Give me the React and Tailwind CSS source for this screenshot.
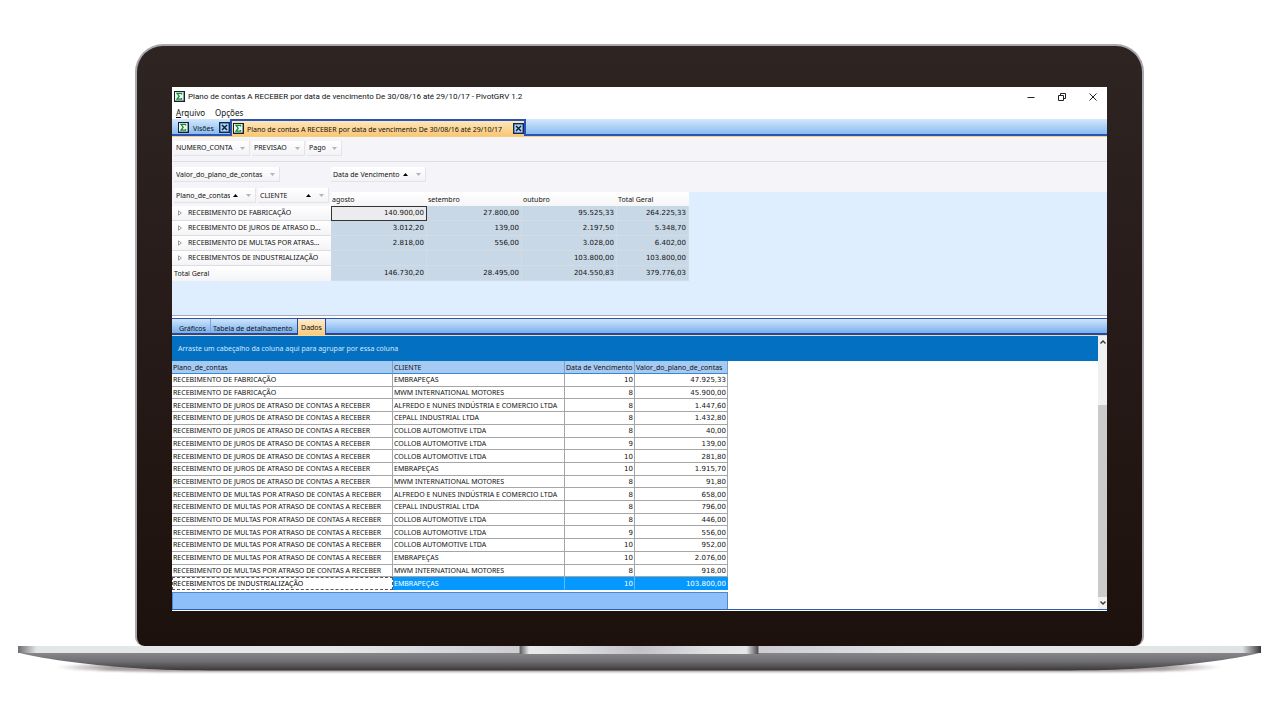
import React from 'react';

const PIVOT_COLUMNS = ['agosto', 'setembro', 'outubro', 'Total Geral'];

const PIVOT_ROWS = [
  ['RECEBIMENTO DE FABRICAÇÃO', '140.900,00', '27.800,00', '95.525,33', '264.225,33'],
  ['RECEBIMENTO DE JUROS DE ATRASO D...', '3.012,20', '139,00', '2.197,50', '5.348,70'],
  ['RECEBIMENTO DE MULTAS POR ATRAS...', '2.818,00', '556,00', '3.028,00', '6.402,00'],
  ['RECEBIMENTOS DE INDUSTRIALIZAÇÃO', '', '', '103.800,00', '103.800,00'],
];

const PIVOT_TOTAL = ['146.730,20', '28.495,00', '204.550,83', '379.776,03'];

const FABRICACAO = 'RECEBIMENTO DE FABRICAÇÃO';
const JUROS = 'RECEBIMENTO DE JUROS DE ATRASO DE CONTAS A RECEBER';
const MULTAS = 'RECEBIMENTO DE MULTAS POR ATRASO DE CONTAS A RECEBER';

const DATA_ROWS = [
  [FABRICACAO, 'EMBRAPEÇAS', '10', '47.925,33'],
  [FABRICACAO, 'MWM INTERNATIONAL MOTORES', '8', '45.900,00'],
  [JUROS, 'ALFREDO E NUNES INDÚSTRIA E COMERCIO LTDA', '8', '1.447,60'],
  [JUROS, 'CEPALL INDUSTRIAL LTDA', '8', '1.432,80'],
  [JUROS, 'COLLOB AUTOMOTIVE LTDA', '8', '40,00'],
  [JUROS, 'COLLOB AUTOMOTIVE LTDA', '9', '139,00'],
  [JUROS, 'COLLOB AUTOMOTIVE LTDA', '10', '281,80'],
  [JUROS, 'EMBRAPEÇAS', '10', '1.915,70'],
  [JUROS, 'MWM INTERNATIONAL MOTORES', '8', '91,80'],
  [MULTAS, 'ALFREDO E NUNES INDÚSTRIA E COMERCIO LTDA', '8', '658,00'],
  [MULTAS, 'CEPALL INDUSTRIAL LTDA', '8', '796,00'],
  [MULTAS, 'COLLOB AUTOMOTIVE LTDA', '8', '446,00'],
  [MULTAS, 'COLLOB AUTOMOTIVE LTDA', '9', '556,00'],
  [MULTAS, 'COLLOB AUTOMOTIVE LTDA', '10', '952,00'],
  [MULTAS, 'EMBRAPEÇAS', '10', '2.076,00'],
  [MULTAS, 'MWM INTERNATIONAL MOTORES', '8', '918,00'],
];

function SigmaIcon() {
  return (
    <svg className="size-[11px] shrink-0" viewBox="0 0 11 11" aria-hidden="true">
      <rect x="0" y="0" width="11" height="11" fill="#16202c" />
      <rect x="1" y="1" width="8.6" height="8.6" fill="#e9f7ee" />
      <path d="M7.6 3.6V2.4H3L5.2 5.2L3 8.2H7.6V7" fill="none" stroke="#0b8a35" strokeWidth="1.2" />
    </svg>
  );
}

function CloseTab({ label }) {
  return (
    <button type="button" aria-label={label} className="shrink-0">
      <svg className="size-[11px]" viewBox="0 0 11 11" aria-hidden="true">
        <rect x="0.7" y="0.7" width="9.6" height="9.6" fill="#a9d3fa" stroke="#102a4c" strokeWidth="1.4" />
        <path d="M3 3L8 8M8 3L3 8" stroke="#0c1a30" strokeWidth="1.4" />
      </svg>
    </button>
  );
}

function Field({ label, width, sorted }) {
  return (
    <button
      type="button"
      className={`flex h-[15px] shrink-0 items-center gap-[3px] border-r border-b border-[#e3e3e8] bg-linear-to-b from-white to-[#f3f3f6] px-[2px] pt-px ${width}`}
    >
      <span className="min-w-0 flex-1 overflow-hidden text-left whitespace-nowrap">{label}</span>
      {sorted && (
        <svg className="mr-[5px] h-[3px] w-[5px] shrink-0" viewBox="0 0 5 3" aria-hidden="true">
          <path d="M0 3L2.5 0L5 3Z" fill="#000" />
        </svg>
      )}
      <svg className="mr-[2px] h-[3px] w-[5px] shrink-0" viewBox="0 0 5 3" aria-hidden="true">
        <path d="M0 0H5L2.5 3Z" fill="#b4b4b8" />
      </svg>
    </button>
  );
}

function TitleBar() {
  return (
    <header className="flex h-[19px] items-center bg-white pr-[10px] pl-[2px] text-[8px]">
      <SigmaIcon />
      <h1 className="ml-[3px] flex-1 font-['Roboto','Noto_Sans',sans-serif] whitespace-nowrap">
        Plano de contas A RECEBER por data de vencimento De 30/08/16 até 29/10/17 - PivotGRV 1.2
      </h1>
      <div className="flex items-center gap-[23px]">
        <button type="button" aria-label="Minimizar">
          <svg className="size-[8px]" viewBox="0 0 8 8" aria-hidden="true">
            <path d="M0.5 4.5H7.5" stroke="#222" strokeWidth="1" />
          </svg>
        </button>
        <button type="button" aria-label="Restaurar">
          <svg className="size-[8px]" viewBox="0 0 8 8" aria-hidden="true" fill="none" stroke="#222">
            <path d="M0.5 2.5H5.5V7.5H0.5ZM2.5 2V0.5H7.5V5.5H6" />
          </svg>
        </button>
        <button type="button" aria-label="Fechar">
          <svg className="size-[8px]" viewBox="0 0 8 8" aria-hidden="true">
            <path d="M0.5 0.5L7.5 7.5M7.5 0.5L0.5 7.5" stroke="#222" strokeWidth="1" />
          </svg>
        </button>
      </div>
    </header>
  );
}

function DocumentTabs() {
  return (
    <div className="flex h-[18px] border-b border-[#f2cf82] bg-linear-to-b from-[#d3e8fc] to-[#7fb5ee]">
      <div className="flex flex-1 border-b-2 border-[#2b52b8]">
        <div className="flex w-[58px] items-center pt-[2px] pl-[6px]">
          <SigmaIcon />
          <button type="button" className="ml-[4px] flex-1 pt-[2px] text-left">Visões</button>
          <CloseTab label="Fechar Visões" />
        </div>
        <div className="-mb-[2px] flex w-[296px] items-center border-x-2 border-t-2 border-[#2b52b8] bg-linear-to-b from-[#fde7ba] to-[#fbc673] pl-px">
          <SigmaIcon />
          <button type="button" className="ml-[3px] flex-1 pt-[2px] text-left whitespace-nowrap">
            Plano de contas A RECEBER por data de vencimento De 30/08/16 até 29/10/17
          </button>
          <CloseTab label="Fechar Plano de contas" />
        </div>
      </div>
    </div>
  );
}

function PivotTable() {
  const value = "bg-[#c9d8e6] border-r border-b border-[#d3dbe3] p-0 pr-[2px] text-right font-['DejaVu_Sans','Noto_Sans',sans-serif] leading-[14px]";
  const focused = "bg-[#ececee] border-r border-b border-[#333] p-0 pr-[2px] text-right font-['DejaVu_Sans','Noto_Sans',sans-serif] leading-[14px] outline-1 -outline-offset-1 outline-[#333]";
  return (
    <div className="h-[128px] bg-[linear-gradient(#f4f4f9_5px,#deeeff_5px)]">
      <table className="w-[517px] table-fixed border-separate border-spacing-0">
        <colgroup>
          <col className="w-[159px]" />
          <col className="w-[96px]" />
          <col className="w-[95px]" />
          <col className="w-[95px]" />
          <col className="w-[72px]" />
        </colgroup>
        <thead>
          <tr className="h-[19px]">
            <th scope="col" className="bg-[#f4f4f9] p-0 align-top font-normal">
              <div className="flex gap-[2px] pt-px pl-[2px]">
                <Field label="Plano_de_contas" width="w-[82px]" sorted />
                <Field label="CLIENTE" width="w-[71px]" sorted />
              </div>
            </th>
            {PIVOT_COLUMNS.map((name) => (
              <th key={name} scope="col" className="p-0 align-bottom font-normal">
                <div className="h-[14px] bg-linear-to-b from-white to-[#f5f5f8] pt-px pl-px text-left leading-[13px]">{name}</div>
              </th>
            ))}
          </tr>
        </thead>
        <tbody>
          {PIVOT_ROWS.map(([label, ...values], row) => (
            <tr key={label} className="h-[15px]">
              <th scope="row" className="border-b border-[#dcdce2] bg-linear-to-b from-white to-[#f4f4f7] p-0 font-normal">
                <button type="button" className="flex items-center pl-[6px] leading-[14px]">
                  <svg className="mr-[6px] h-[6px] w-[4px]" viewBox="0 0 4 6" aria-hidden="true">
                    <path d="M0.5 0.8L3.4 3L0.5 5.2Z" fill="#fff" stroke="#777" strokeWidth="0.7" />
                  </svg>
                  <span className="whitespace-nowrap">{label}</span>
                </button>
              </th>
              {values.map((text, i) => (
                <td key={i} className={row === 0 && i === 0 ? focused : value}>
                  {text}
                </td>
              ))}
            </tr>
          ))}
          <tr>
            <th scope="row" className="bg-linear-to-b from-white to-[#f4f4f7] p-0 pl-[2px] text-left font-normal">Total Geral</th>
            {PIVOT_TOTAL.map((text) => (
              <td key={text} className={value}>
                {text}
              </td>
            ))}
          </tr>
        </tbody>
      </table>
    </div>
  );
}

function DetailTabs() {
  return (
    <div className="border-t border-[#a5abbb] bg-white pt-[2px]">
      <div className="flex h-[17px] border-t border-b-2 border-t-[#2f55a8] border-b-[#2247a8] bg-linear-to-b from-[#cfe5fc] to-[#78b0ec] pl-[4px]">
        <button type="button" className="w-[35px] border-r border-[#7fa6d6] pt-[4px] pl-[3px] text-left">Gráficos</button>
        <button type="button" className="w-[86px] pt-[4px] pl-[2px] text-left whitespace-nowrap">Tabela de detalhamento</button>
        <button type="button" className="-mt-px -mb-[2px] w-[29px] border-x border-t border-[#2247a8] bg-linear-to-b from-[#fdeccb] to-[#fbc87a] pt-[2px]">
          Dados
        </button>
      </div>
      <div className="h-px bg-[#f4dc9c]" />
    </div>
  );
}

function DataGrid() {
  const cell = 'overflow-hidden border-r border-b border-[#a6a6a6] p-0 pt-px pl-px whitespace-nowrap';
  const number = "border-r border-b border-[#a6a6a6] p-0 pt-px pr-px text-right font-['DejaVu_Sans','Noto_Sans',sans-serif]";
  return (
    <div className="flex border-b border-[#2a5fae]">
      <div className="flex-1 bg-white">
        <p className="h-[25px] bg-[#0470c2] pl-[6px] leading-[25px] text-[#d5e9fb]">
          Arraste um cabeçalho da coluna aqui para agrupar por essa coluna
        </p>
        <table className="h-[229px] w-[556px] table-fixed border-separate border-spacing-0 leading-[10px]">
          <colgroup>
            <col className="w-[221px]" />
            <col className="w-[172px]" />
            <col className="w-[70px]" />
            <col className="w-[93px]" />
          </colgroup>
          <thead>
            <tr className="h-[13px] bg-[#a6cbf3] text-left">
              {['Plano_de_contas', 'CLIENTE', 'Data de Vencimento', 'Valor_do_plano_de_contas'].map((name) => (
                <th key={name} scope="col" className="border-r border-b border-r-[#7e9fc8] border-b-[#3b84d6] p-0 pt-[2px] pl-px font-normal whitespace-nowrap">
                  {name}
                </th>
              ))}
            </tr>
          </thead>
          <tbody>
            {DATA_ROWS.map(([account, client, due, amount], i) => (
              <tr key={i}>
                <td className={cell}>{account}</td>
                <td className={cell}>{client}</td>
                <td className={number}>{due}</td>
                <td className={number}>{amount}</td>
              </tr>
            ))}
            <tr className="text-white">
              <td className="border-r border-b border-transparent bg-white p-0 pt-px pl-px text-black outline-1 -outline-offset-1 outline-dashed outline-[#555]">
                RECEBIMENTOS DE INDUSTRIALIZAÇÃO
              </td>
              <td className="border-r border-b border-r-[#5cbcff] border-b-[#0598ff] bg-[#0598ff] p-0 pt-px pl-px">EMBRAPEÇAS</td>
              <td className="border-r border-b border-r-[#5cbcff] border-b-[#0598ff] bg-[#0598ff] p-0 pt-px pr-px text-right font-['DejaVu_Sans','Noto_Sans',sans-serif]">10</td>
              <td className="border-r border-b border-[#0598ff] bg-[#0598ff] p-0 pt-px pr-px text-right font-['DejaVu_Sans','Noto_Sans',sans-serif]">103.800,00</td>
            </tr>
          </tbody>
        </table>
        <div className="mt-[2px] h-[17px] w-[556px] border border-b-0 border-[#4d88cc] bg-[#8fbff9]" />
      </div>
      <div className="flex w-[9px] flex-col items-center bg-[#f0f0f0]">
        <button type="button" aria-label="Rolar para cima" className="flex h-[12px] w-full items-center justify-center">
          <svg className="h-[4px] w-[6px]" viewBox="0 0 6 4" aria-hidden="true">
            <path d="M0.5 3.5L3 1L5.5 3.5" fill="none" stroke="#333" strokeWidth="1.3" />
          </svg>
        </button>
        <div className="mt-[57px] w-full flex-1 bg-[#cbcbcb]" />
        <button type="button" aria-label="Rolar para baixo" className="flex h-[12px] w-full items-center justify-center">
          <svg className="h-[4px] w-[6px]" viewBox="0 0 6 4" aria-hidden="true">
            <path d="M0.5 0.5L3 3L5.5 0.5" fill="none" stroke="#333" strokeWidth="1.3" />
          </svg>
        </button>
      </div>
    </div>
  );
}

function LaptopBase() {
  return (
    <svg className="block h-[30px] w-full" viewBox="0 0 1244 30" preserveAspectRatio="none" aria-hidden="true">
      <defs>
        <linearGradient id="lip" x1="0" x2="1" y1="0" y2="0">
          <stop offset="0" stopColor="#6d6d70" />
          <stop offset="0.015" stopColor="#e3e6e7" />
          <stop offset="0.25" stopColor="#e6e9ea" />
          <stop offset="0.4" stopColor="#cdcdd2" />
          <stop offset="0.6" stopColor="#cdcdd2" />
          <stop offset="0.75" stopColor="#e6e9ea" />
          <stop offset="0.985" stopColor="#dfe3e4" />
          <stop offset="1" stopColor="#38383b" />
        </linearGradient>
        <linearGradient id="body" x1="0" x2="0" y1="0" y2="1">
          <stop offset="0" stopColor="#88888b" />
          <stop offset="0.5" stopColor="#6f6f73" />
          <stop offset="0.85" stopColor="#49484b" />
          <stop offset="1" stopColor="#3a3636" />
        </linearGradient>
        <linearGradient id="notch" x1="0" x2="1" y1="0" y2="0">
          <stop offset="0" stopColor="#59595c" />
          <stop offset="0.04" stopColor="#e9ebec" />
          <stop offset="0.2" stopColor="#dfe1e3" />
          <stop offset="0.5" stopColor="#c3c2c7" />
          <stop offset="0.8" stopColor="#dfe1e3" />
          <stop offset="0.95" stopColor="#e4e6e8" />
          <stop offset="1" stopColor="#48484b" />
        </linearGradient>
        <linearGradient id="shade" x1="0" x2="1" y1="0" y2="0">
          <stop offset="0" stopColor="#8a807e" stopOpacity="0" />
          <stop offset="0.05" stopColor="#8a807e" stopOpacity="0.75" />
          <stop offset="0.95" stopColor="#8a807e" stopOpacity="0.75" />
          <stop offset="1" stopColor="#8a807e" stopOpacity="0" />
        </linearGradient>
        <filter id="soft" x="-5%" y="-50%" width="110%" height="200%">
          <feGaussianBlur stdDeviation="2 1" />
        </filter>
      </defs>
      <path d="M36 21C60 18 100 18 130 20H1114C1144 18 1184 18 1206 21C1190 25 1150 25 1100 26H142C92 25 52 25 36 21Z" fill="url(#shade)" filter="url(#soft)" />
      <path d="M0 6.5C30 14 70 19 130 23C150 24 180 24.500 220 24.500H1024C1064 24.500 1094 24 1114 23C1174 19 1214 14 1244 6.500Z" fill="url(#body)" />
      <rect x="0" y="0" width="1244" height="7" fill="url(#lip)" />
      <rect x="502" y="0" width="239" height="8" fill="url(#notch)" />
    </svg>
  );
}

export default function App() {
  return (
    <div className="min-h-screen bg-white pt-[44px] pr-[19px] pl-[18px] font-['Noto_Sans','Open_Sans',sans-serif] text-[7px] leading-[12px] text-[#111]">
      <div className="mx-[117px] rounded-t-[28px] rounded-b-[9px] border-x-2 border-t-2 border-[#a9a9ad] bg-linear-to-b from-[#2e2422] to-[#1d110d] px-[35px] pt-[41px] pb-[35px]">
        <main className="overflow-hidden border-b border-white bg-white">
          <TitleBar />
          <nav className="flex h-[13px] items-center gap-[10px] bg-white pl-[4px] text-[8px]">
            <button type="button"><span className="underline">A</span>rquivo</button>
            <button type="button">Opções</button>
          </nav>
          <DocumentTabs />
          <div className="flex h-[25px] items-center gap-[2px] border-b border-[#dedee2] bg-[#f4f4f9] pb-[2px] pl-[2px]">
            <Field label="NUMERO_CONTA" width="w-[76px]" />
            <Field label="PREVISAO" width="w-[53px]" />
            <Field label="Pago" width="w-[35px]" />
          </div>
          <div className="flex h-[25px] items-center gap-[51px] bg-[#f4f4f9] pl-[2px]">
            <Field label="Valor_do_plano_de_contas" width="w-[106px]" />
            <Field label="Data de Vencimento" width="w-[95px]" sorted />
          </div>
          <PivotTable />
          <DetailTabs />
          <DataGrid />
        </main>
      </div>
      <LaptopBase />
    </div>
  );
}
